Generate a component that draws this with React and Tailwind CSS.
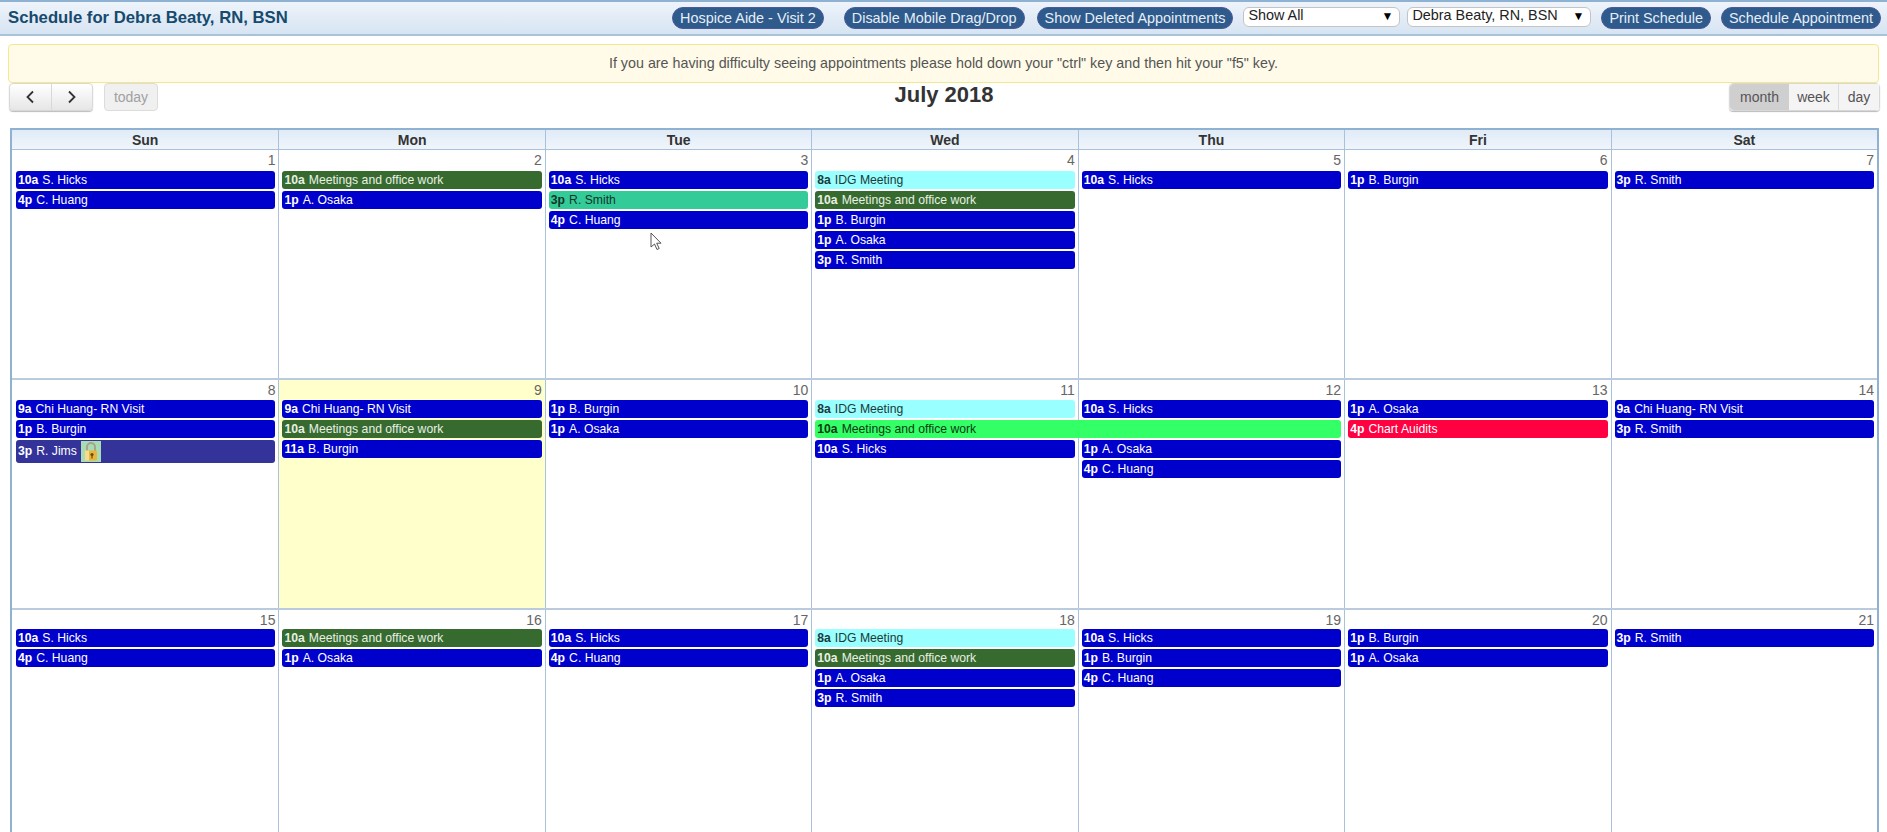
const BLUE = "bg-[#0000cd] text-white";
const DGREEN = "bg-[#376a2f] text-[#e8f0e4]";
const TEAL = "bg-[#33cc99] text-[#14342a]";
const CYAN = "bg-[#99ffff] text-[#1c3a3a]";
const LIME = "bg-[#33ff66] text-[#0c3a14]";
const RED = "bg-[#ff0040] text-white";
const PURPLE = "bg-[#333399] text-white";

const COL = ["col-start-1", "col-start-2", "col-start-3", "col-start-4", "col-start-5", "col-start-6", "col-start-7"];
const ROW = ["row-start-2", "row-start-3", "row-start-4", "row-start-5", "row-start-6"];

const weeks = [
  {
    rows: "h-[228px] grid-rows-[21px_20px_20px_20px_20px_20px_1fr]",
    days: [1, 2, 3, 4, 5, 6, 7],
    events: [
      [0, 0, "10a", "S. Hicks", BLUE], [0, 1, "4p", "C. Huang", BLUE],
      [1, 0, "10a", "Meetings and office work", DGREEN], [1, 1, "1p", "A. Osaka", BLUE],
      [2, 0, "10a", "S. Hicks", BLUE], [2, 1, "3p", "R. Smith", TEAL], [2, 2, "4p", "C. Huang", BLUE],
      [3, 0, "8a", "IDG Meeting", CYAN], [3, 1, "10a", "Meetings and office work", DGREEN],
      [3, 2, "1p", "B. Burgin", BLUE], [3, 3, "1p", "A. Osaka", BLUE], [3, 4, "3p", "R. Smith", BLUE],
      [4, 0, "10a", "S. Hicks", BLUE], [5, 0, "1p", "B. Burgin", BLUE], [6, 0, "3p", "R. Smith", BLUE],
    ],
  },
  {
    rows: "h-[230px] grid-rows-[20px_20px_20px_20px_20px_20px_1fr]",
    days: [8, 9, 10, 11, 12, 13, 14],
    today: 1,
    events: [
      [0, 0, "9a", "Chi Huang- RN Visit", BLUE], [0, 1, "1p", "B. Burgin", BLUE],
      [0, 2, "3p", "R. Jims", PURPLE, "lock"],
      [1, 0, "9a", "Chi Huang- RN Visit", BLUE], [1, 1, "10a", "Meetings and office work", DGREEN], [1, 2, "11a", "B. Burgin", BLUE],
      [2, 0, "1p", "B. Burgin", BLUE], [2, 1, "1p", "A. Osaka", BLUE],
      [3, 0, "8a", "IDG Meeting", CYAN], [3, 1, "10a", "Meetings and office work", LIME, "span"], [3, 2, "10a", "S. Hicks", BLUE],
      [4, 0, "10a", "S. Hicks", BLUE], [4, 2, "1p", "A. Osaka", BLUE], [4, 3, "4p", "C. Huang", BLUE],
      [5, 0, "1p", "A. Osaka", BLUE], [5, 1, "4p", "Chart Auidits", RED],
      [6, 0, "9a", "Chi Huang- RN Visit", BLUE], [6, 1, "3p", "R. Smith", BLUE],
    ],
  },
  {
    rows: "h-[226px] grid-rows-[19px_20px_20px_20px_20px_20px_1fr]",
    days: [15, 16, 17, 18, 19, 20, 21],
    events: [
      [0, 0, "10a", "S. Hicks", BLUE], [0, 1, "4p", "C. Huang", BLUE],
      [1, 0, "10a", "Meetings and office work", DGREEN], [1, 1, "1p", "A. Osaka", BLUE],
      [2, 0, "10a", "S. Hicks", BLUE], [2, 1, "4p", "C. Huang", BLUE],
      [3, 0, "8a", "IDG Meeting", CYAN], [3, 1, "10a", "Meetings and office work", DGREEN],
      [3, 2, "1p", "A. Osaka", BLUE], [3, 3, "3p", "R. Smith", BLUE],
      [4, 0, "10a", "S. Hicks", BLUE], [4, 1, "1p", "B. Burgin", BLUE], [4, 2, "4p", "C. Huang", BLUE],
      [5, 0, "1p", "B. Burgin", BLUE], [5, 1, "1p", "A. Osaka", BLUE], [6, 0, "3p", "R. Smith", BLUE],
    ],
  },
];

function Lock() {
  return (
    <svg width="20" height="21" viewBox="0 0 20 21" className="ml-1 shrink-0">
      <rect width="20" height="21" fill="#a9dcb4" />
      <path d="M6 10V6a4 4 0 0 1 8 0v4" fill="none" stroke="#a8a48c" strokeWidth="2" />
      <rect x="4" y="9.5" width="12" height="10" rx="1" fill="#e8b63c" />
      <rect x="4" y="9.5" width="4" height="10" fill="#f6dc8c" />
      <circle cx="11" cy="13.5" r="1.6" fill="#6a4a12" />
      <rect x="10.4" y="14" width="1.2" height="3.5" fill="#6a4a12" />
    </svg>
  );
}

function Event({ e }) {
  const [col, row, time, name, color, extra] = e;
  const tall = extra === "lock";
  return (
    <div
      className={`${COL[col]} ${ROW[row]} ${extra === "span" ? "col-span-2" : ""} mr-[3px] ml-[4px] ${
        tall ? "h-[23px]" : "h-[18px]"
      } ${color} z-10 flex items-center rounded-[3px] px-[2px] text-[12.2px] leading-none whitespace-nowrap`}
    >
      <span className="mr-[4px] font-bold">{time}</span>
      <span>{name}</span>
      {tall && <Lock />}
    </div>
  );
}

function Pill({ children }) {
  return (
    <button className="h-[22px] rounded-full border border-[#4a5a9a] bg-[#2f5a8c] px-[7px] text-[14.4px] leading-none whitespace-nowrap text-[#e6eef8]">
      {children}
    </button>
  );
}

function Sel({ label, w }) {
  return (
    <div className={`${w} mb-[3px] flex h-[20px] items-center justify-between rounded-[6px] border border-[#c4c4c4] bg-white pr-[6px] pb-[1px] pl-[4px] text-[14.4px] text-[#222]`}>
      <span>{label}</span>
      <span className="text-[12px] text-black">▼</span>
    </div>
  );
}

export default function App() {
  return (
    <div className="relative h-[832px] w-[1887px] overflow-hidden bg-white font-['Liberation_Sans',Arial,sans-serif]">
      <header className="flex h-[36px] items-center justify-between border-y-2 border-t-[#8fb2d2] border-b-[#a9c2dc] bg-gradient-to-b from-[#eef4fb] to-[#d6e4f2] pr-[6px] pl-[8px]">
        <h1 className="text-[16.7px] font-bold text-[#164a6e]">Schedule for Debra Beaty, RN, BSN</h1>
        <div className="flex items-center">
          <Pill>Hospice Aide - Visit 2</Pill>
          <div className="ml-[20px]"><Pill>Disable Mobile Drag/Drop</Pill></div>
          <div className="ml-[12px]"><Pill>Show Deleted Appointments</Pill></div>
          <div className="ml-[10px]"><Sel label="Show All" w="w-[157px]" /></div>
          <div className="ml-[7px]"><Sel label="Debra Beaty, RN, BSN" w="w-[184px]" /></div>
          <div className="ml-[10px]"><Pill>Print Schedule</Pill></div>
          <div className="ml-[10px]"><Pill>Schedule Appointment</Pill></div>
        </div>
      </header>

      <div className="mx-[8px] mt-[8px] flex h-[39px] items-center justify-center rounded-[4px] border border-[#f4e88c] bg-[#fffbe8] text-[14.3px] text-[#555]">
        If you are having difficulty seeing appointments please hold down your "ctrl" key and then hit your "f5" key.
      </div>

      <div className="mr-[7px] ml-[8px] grid h-[45px] grid-cols-3">
        <div className="flex items-start pl-[1px]">
          <div className="flex h-[28px] w-[84px] rounded-[4px] border border-[#d8d8d8] bg-gradient-to-b from-white to-[#e6e6e6] shadow-[0_1px_1px_#bbb]">
            <button className="flex flex-1 items-center justify-center border-r border-[#d8d8d8]">
              <svg width="10" height="14" viewBox="0 0 10 14"><path d="M8 1.5 2.5 7 8 12.5" fill="none" stroke="#333" strokeWidth="1.8" /></svg>
            </button>
            <button className="flex flex-1 items-center justify-center">
              <svg width="10" height="14" viewBox="0 0 10 14"><path d="M2 1.5 7.5 7 2 12.5" fill="none" stroke="#333" strokeWidth="1.8" /></svg>
            </button>
          </div>
          <button className="ml-[11px] h-[28px] w-[54px] rounded-[4px] border border-[#dcdcdc] bg-[#f0f0f0] text-[14px] text-[#a0a0a0]">today</button>
        </div>
        <div className="flex justify-center">
          <h2 className="text-[22px] leading-[24px] font-bold text-[#333]">July 2018</h2>
        </div>
        <div className="flex items-start justify-end">
          <div className="flex h-[28px] rounded-[4px] border border-[#d8d8d8] text-[14px] text-[#555] shadow-[0_1px_1px_#bbb]">
            <span className="flex w-[59px] items-center justify-center rounded-l-[4px] bg-[#cfcfcf]">month</span>
            <span className="flex w-[50px] items-center justify-center border-r border-[#dcdcdc] bg-[#f4f4f4]">week</span>
            <span className="flex w-[40px] items-center justify-center bg-[#f4f4f4]">day</span>
          </div>
        </div>
      </div>

      <div className="mr-[8px] ml-[10px] border-x-2 border-t-2 border-[#8fb2d2]">
        <div className="grid h-[20px] grid-cols-7 border-b border-[#a9c2dc] bg-gradient-to-b from-[#e0ebf7] to-[#f0f5fb] pb-[1px] text-[14px] font-bold text-[#333]">
          {["Sun", "Mon", "Tue", "Wed", "Thu", "Fri", "Sat"].map((d, i) => (
            <div key={d} className={`flex items-center justify-center ${i ? "border-l border-[#a9c2dc]" : ""}`}>{d}</div>
          ))}
        </div>
        {weeks.map((w, wi) => (
          <div key={wi} className={`grid grid-cols-7 ${w.rows} ${wi ? "border-t-2 border-[#b9cbdc]" : ""}`}>
            {w.days.map((d, i) => (
              <div
                key={d}
                className={`${COL[i]} row-[1/-1] pr-[3px] text-right text-[14px] leading-[20px] text-[#666] ${i ? "border-l border-[#a9c2dc]" : ""} ${
                  w.today === i ? "bg-[#ffffcc]" : ""
                }`}
              >
                {d}
              </div>
            ))}
            {w.events.map((e, i) => <Event key={i} e={e} />)}
          </div>
        ))}
      </div>

      <svg width="13" height="19" viewBox="0 0 13 19" className="absolute top-[232px] left-[650px] z-20">
        <path d="M1 1v14l3.5-3 2.5 5.5 2.2-1-2.5-5.3H11z" fill="#fff" stroke="#555" strokeWidth="1" />
      </svg>
    </div>
  );
}
